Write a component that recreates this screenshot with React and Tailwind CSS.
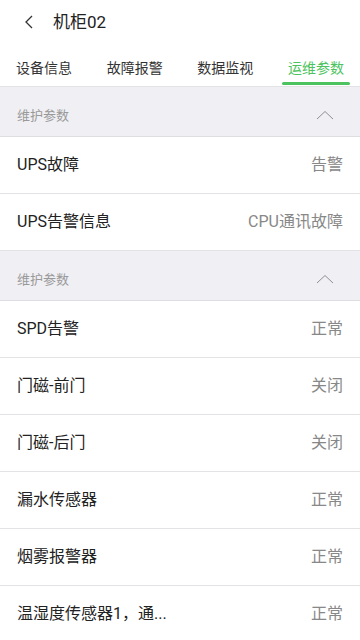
const SECTIONS = [
  {
    title: "维护参数",
    rows: [
      ["UPS故障", "告警"],
      ["UPS告警信息", "CPU通讯故障"],
    ],
  },
  {
    title: "维护参数",
    rows: [
      ["SPD告警", "正常"],
      ["门磁-前门", "关闭"],
      ["门磁-后门", "关闭"],
      ["漏水传感器", "正常"],
      ["烟雾报警器", "正常"],
      ["温湿度传感器1，通...", "正常"],
    ],
  },
];

const TABS = ["设备信息", "故障报警", "数据监视", "运维参数"];

function ChevronUp() {
  return (
    <svg width="18" height="10" viewBox="0 0 18 10" fill="none">
      <path d="M1 9L9 1.5L17 9" stroke="#8e8e93" strokeWidth="1" />
    </svg>
  );
}

export default function App() {
  return (
    <div
      className="w-[360px] h-[640px] overflow-hidden bg-white"
      style={{ fontFamily: 'Roboto, "Noto Sans CJK SC", sans-serif' }}
    >
      <div className="h-[44px] flex items-center">
        <svg className="ml-[24px]" width="10" height="14" viewBox="0 0 10 14" fill="none">
          <path d="M8 1L2 7L8 13" stroke="#333" strokeWidth="1.3" />
        </svg>
        <span className="ml-[19px] text-[17px] text-[#222] leading-none">机柜02</span>
      </div>

      <div className="h-[43px] flex justify-between px-[12px] border-b border-[#e3e3e6]">
        {TABS.map((t, i) => (
          <div key={t} className="relative w-[64px] flex items-center justify-center">
            <span
              className={
                "text-[14px] leading-none mt-[5px] " +
                (i === 3 ? "text-[#4cc35e]" : "text-[#333]")
              }
            >
              {t}
            </span>
            {i === 3 && (
              <div className="absolute left-[-2px] right-[-2px] bottom-[1px] h-[3px] bg-[#4cc35e] rounded-full" />
            )}
          </div>
        ))}
      </div>

      {SECTIONS.map((s, si) => (
        <div key={si}>
          <div className="h-[50px] bg-[#f0eff4] border-b border-[#dedee2] flex items-end justify-between pl-[17px] pr-[26px] pb-[11px]">
            <span className="text-[13px] leading-[18px] text-[#999]">{s.title}</span>
            <span className="mb-[5px]">
              <ChevronUp />
            </span>
          </div>
          {s.rows.map(([k, v]) => (
            <div
              key={k}
              className="h-[57px] border-b border-[#e3e3e6] flex items-center justify-between pl-[17px] pr-[17px]"
            >
              <span className="text-[16px] text-[#222]">{k}</span>
              <span className="text-[16px] text-[#888]">{v}</span>
            </div>
          ))}
        </div>
      ))}
    </div>
  );
}
